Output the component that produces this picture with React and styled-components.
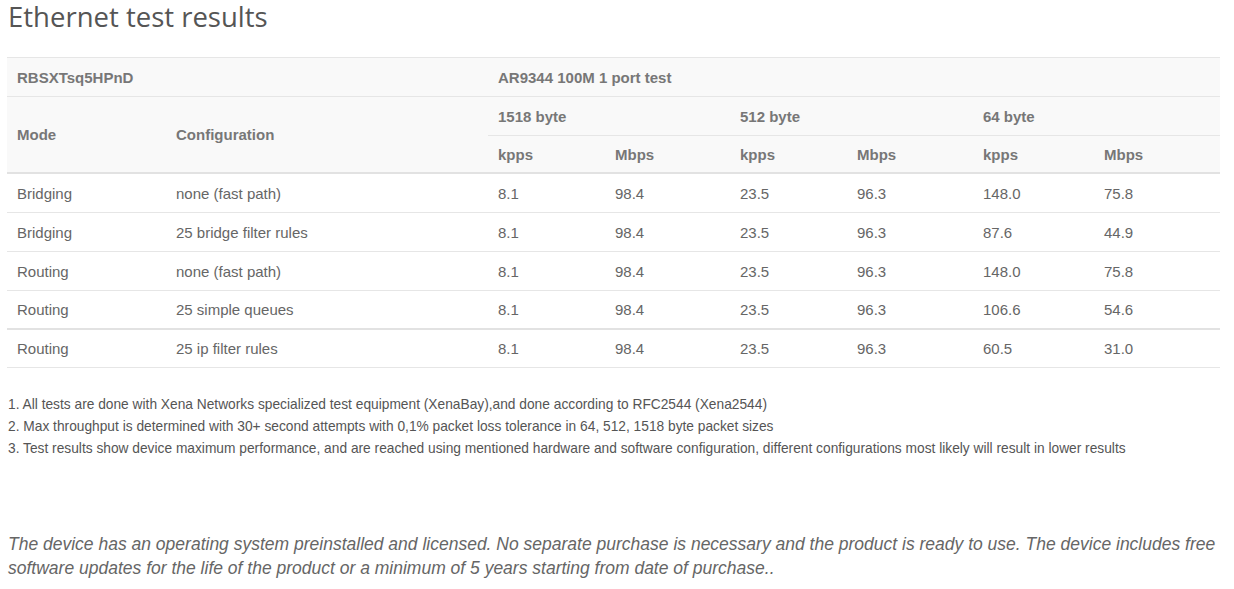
import React from "react";
import styled, { createGlobalStyle } from "styled-components";

const GlobalStyle = createGlobalStyle`
  body {
    margin: 0;
    background: #fff;
    font-family: "Liberation Sans", Arial, sans-serif;
  }
`;

const rows = [
  ["Bridging", "none (fast path)", "8.1", "98.4", "23.5", "96.3", "148.0", "75.8"],
  ["Bridging", "25 bridge filter rules", "8.1", "98.4", "23.5", "96.3", "87.6", "44.9"],
  ["Routing", "none (fast path)", "8.1", "98.4", "23.5", "96.3", "148.0", "75.8"],
  ["Routing", "25 simple queues", "8.1", "98.4", "23.5", "96.3", "106.6", "54.6"],
];

const lastRows = [
  ["Routing", "25 ip filter rules", "8.1", "98.4", "23.5", "96.3", "60.5", "31.0"],
];

const widths = [159, 322, 117, 125, 117, 126, 121, 126];

export default function App() {
  return (
    <Page>
      <GlobalStyle />
      <Title>Ethernet test results</Title>
      <Table>
        <colgroup>
          {widths.map((w, i) => (
            <col key={i} style={{ width: w }} />
          ))}
        </colgroup>
        <thead>
          <tr>
            <Th colSpan={2}>RBSXTsq5HPnD</Th>
            <Th colSpan={6}>AR9344 100M 1 port test</Th>
          </tr>
          <tr>
            <Th rowSpan={2}>Mode</Th>
            <Th rowSpan={2}>Configuration</Th>
            <Th colSpan={2}>1518 byte</Th>
            <Th colSpan={2}>512 byte</Th>
            <Th colSpan={2}>64 byte</Th>
          </tr>
          <tr>
            {["kpps", "Mbps", "kpps", "Mbps", "kpps", "Mbps"].map((u, i) => (
              <Th key={i} $h={36}>{u}</Th>
            ))}
          </tr>
        </thead>
        <tbody>
          {rows.map((r, i) => (
            <tr key={i}>
              {r.map((c, j) => (
                <Td key={j} $h={i === 3 ? 37 : 38}>{c}</Td>
              ))}
            </tr>
          ))}
        </tbody>
        <LastBody>
          {lastRows.map((r, i) => (
            <tr key={i}>
              {r.map((c, j) => (
                <Td key={j} $h={37}>{c}</Td>
              ))}
            </tr>
          ))}
        </LastBody>
      </Table>

      <Notes>
        <li>1. All tests are done with Xena Networks specialized test equipment (XenaBay),and done according to RFC2544 (Xena2544)</li>
        <li>2. Max throughput is determined with 30+ second attempts with 0,1% packet loss tolerance in 64, 512, 1518 byte packet sizes</li>
        <li>3. Test results show device maximum performance, and are reached using mentioned hardware and software configuration, different configurations most likely will result in lower results</li>
      </Notes>

      <Disclaimer>
        The device has an operating system preinstalled and licensed. No separate purchase is necessary and the product is ready to use. The device includes free software updates for the life of the product or a minimum of 5 years starting from date of purchase..
      </Disclaimer>
    </Page>
  );
}

const Page = styled.div`
  padding: 0 14px 0 7px;
  width: 1213px;
`;

const Title = styled.h1`
  margin: 0 0 23px 1px;
  font-family: "Open Sans", sans-serif;
  font-weight: 400;
  font-size: 27.5px;
  line-height: 34px;
  color: #555;
`;

const Table = styled.table`
  width: 1213px;
  table-layout: fixed;
  border-collapse: collapse;
  font-size: 15px;
  color: #666;

  thead {
    background: #f9f9f9;
    border-top: 1px solid #e4e4e4;
    border-bottom: 2px solid #e2e2e2;
  }
`;

const Th = styled.th`
  text-align: left;
  font-weight: bold;
  color: #777;
  height: ${(p) => p.$h || 38}px;
  padding: 0 10px;
  border-top: 1px solid #e6e6e6;
  vertical-align: middle;
`;

const Td = styled.td`
  height: ${(p) => p.$h}px;
  padding: 0 10px;
  border-bottom: 1px solid #e6e6e6;
  vertical-align: middle;
  white-space: nowrap;
`;

const LastBody = styled.tbody`
  border-top: 2px solid #e2e2e2;
`;

const Notes = styled.ul`
  list-style: none;
  margin: 26px 0 0 1px;
  padding: 0;
  font-size: 13.75px;
  line-height: 22px;
  color: #555;
`;

const Disclaimer = styled.p`
  margin: 72px 0 0 1px;
  font-size: 17.5px;
  line-height: 24px;
  font-style: italic;
  color: #666;
`;
